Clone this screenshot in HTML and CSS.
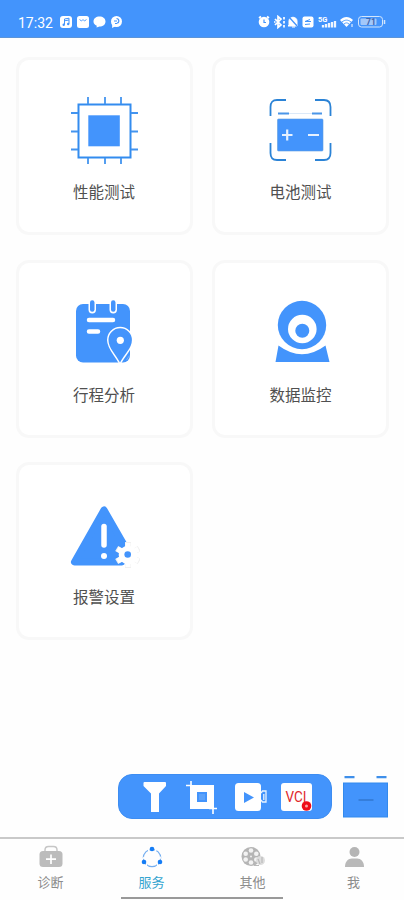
FILE: index.html
```html
<!DOCTYPE html>
<html lang="zh-CN">
<head>
    <meta charset="UTF-8">
    <meta name="viewport" content="width=device-width, initial-scale=1.0">
    <title>服务</title>
    <link rel="stylesheet" href="styles.css">
</head>
<body>
    <div class="app">
        <header class="status-bar">
            <span class="time">17:32</span>
            <svg class="status-left" width="64" height="14" viewBox="0 0 64 14">
                <rect x="0" y="1" width="12" height="12" rx="3" fill="#fff"/>
                <path d="M4.5 9.5V4L9 3.2v5.5M4.5 5.8L9 5" fill="none" stroke="#4394fc" stroke-width="1"/>
                <circle cx="3.7" cy="9.7" r="1.2" fill="#4394fc"/>
                <circle cx="8.2" cy="9" r="1.2" fill="#4394fc"/>
                <rect x="17" y="1" width="12" height="12" rx="2.5" fill="#fff"/>
                <path d="M19.5 4.500l2 1.5L23 4.5l1.500 1.500L26.500 4.500" fill="none" stroke="#4394fc" stroke-width=".9"/>
                <path d="M39.500 1.500c3.500 0 6 2 6 5s-2.500 5-6 5l-3 1 .3-1.700c-2-.8-3.300-2.300-3.300-4.300 0-3 2.500-5 6-5z" fill="#fff"/>
                <circle cx="56.500" cy="6.500" r="5.500" fill="#fff"/>
                <path d="M52.500 8l-.5 5 4-2z" fill="#fff"/>
                <path d="M56.500 3.500c3 0 3 4.500.5 4.500M54 6h3M55 8.500h2" fill="none" stroke="#4394fc" stroke-width="1.200"/>
            </svg>
            <svg class="status-right" width="130" height="14" viewBox="0 0 130 14">
                <circle cx="6" cy="7" r="5.300" fill="#fff"/>
                <path d="M1 3l2-1.500M11 3L9 1.500" stroke="#fff" stroke-width="1.700"/>
                <path d="M6 4.500V7.500H8" fill="none" stroke="#4394fc" stroke-width="1.200"/>
                <path d="M17 4l6 6-3 2.500v-11L23 4l-6 6M16 7h1.500M26 2v2.500M26 6v2.500M26 10v2.500" fill="none" stroke="#fff" stroke-width="1.700"/>
                <path d="M31 10V6c0-5 8-5 8 0v4l1 1H30zM34 12h3" fill="#fff" stroke="#fff"/>
                <path d="M31 2l9 10" stroke="#4394fc" stroke-width="1.300"/>
                <rect x="44.500" y="1.500" width="11" height="11" rx="2" fill="#fff"/>
                <path d="M52 4.500l-5 2h6M47 9.500l5-.5" fill="none" stroke="#4394fc" stroke-width="1"/>
                <text x="60" y="6.500" font-size="7.500" font-weight="bold" fill="#fff">5G</text>
                <path d="M65 12.500V10M68 12.500V9M71 12.500V8M74 12.500V7M77 12.500V6" stroke="#eef5ff" stroke-width="2.300"/>
                <path d="M82 5c4-4 9-4 13 0l-6.500 7z" fill="#fff"/>
                <path d="M84 7c3-2.500 6-2.500 9 0M86 9c2-1.500 3-1.500 5 0" fill="none" stroke="#4394fc" stroke-width=".9"/>
                <path d="M94 9v3" stroke="#fff"/>
                <rect x="100.500" y="1.500" width="24" height="10.500" rx="3" fill="none" stroke="#d3e6fc"/>
                <rect x="102.500" y="3.500" width="16" height="6.500" rx="1" fill="#a3c8fa"/>
                <path d="M126.500 5v4" stroke="#d3e6fc" stroke-width="1.500"/>
                <text x="108" y="10" font-size="8.500" font-weight="bold" fill="#4065ad">71</text>
            </svg>
        </header>

        <main class="services">
            <div class="card">
                <svg class="card-icon" viewBox="0 0 71 71">
                    <rect x="9.500" y="8.500" width="52" height="53" fill="none" stroke="#338cef" stroke-width="2"/>
                    <rect x="19.300" y="19.300" width="31.500" height="31" fill="#4394fc"/>
                    <path d="M19 1V8M36 1V8M52 1V8M19 62v6M36 62v6M52 62v6M2 17h7M2 35.500h7M2 53.500h7M62 17h7M62 35.500h7M62 53.500h7" stroke="#4394ef" stroke-width="1.800"/>
                </svg>
                <div class="card-title">性能测试</div>
            </div>
            <div class="card">
                <svg class="card-icon" viewBox="0 0 71 71">
                    <path d="M5.500 20v-9q0-7 6.500-7h9M50 4h9q6.500 0 6.500 7v9M65.500 47v10q0 7-6.500 7h-9M21 64h-9q-6.500 0-6.500-7v-10" fill="none" stroke="#2b83d6" stroke-width="1.800"/>
                    <path d="M13 17.500h44" stroke="#dce9f8"/>
                    <path d="M13 17.500h11M47 17.500h10" stroke="#4b96e8" stroke-width="2"/>
                    <rect x="12.500" y="23" width="45.500" height="32" rx="1" fill="#4394fc" stroke="#5b9cdf" stroke-width=".6"/>
                    <path d="M17 39h10.500M22.200 33.500v11M43 39h11" stroke="#e6f1ff" stroke-width="2.200"/>
                </svg>
                <div class="card-title">电池测试</div>
            </div>
            <div class="card">
                <svg class="card-icon" viewBox="0 0 71 71">
                    <rect x="7" y="6" width="54" height="58.500" rx="7" fill="#4394fc"/>
                    <rect x="19.500" y="1" width="7.500" height="14.500" rx="3.700" fill="#fff"/>
                    <rect x="40.500" y="1" width="7.500" height="14.500" rx="3.700" fill="#fff"/>
                    <rect x="21" y="2.300" width="4.500" height="11.500" rx="2.200" fill="#4394fc"/>
                    <rect x="42" y="2.300" width="4.500" height="11.500" rx="2.200" fill="#4394fc"/>
                    <path d="M20 22h24M20 33.500h9" stroke="#fff" stroke-width="4.500" stroke-linecap="round"/>
                    <path class="pin" d="M51 64.500C46.500 56 39.500 50 39.500 42a11.700 11.700 0 0 1 23.400 0c0 8-7.400 14-11.900 22.500z"/>
                    <path d="M57.500 62l3-4.500" stroke="#78b0fa" stroke-width="1"/>
                    <circle cx="51.300" cy="42.300" r="3.600" fill="#fff"/>
                </svg>
                <div class="card-title">行程分析</div>
            </div>
            <div class="card">
                <svg class="card-icon" viewBox="0 0 71 71">
                    <path d="M13.500 47.500Q37 65 60.500 47.500L64.500 64h-54z" fill="#4394fc"/>
                    <circle cx="37" cy="27" r="26" fill="#fff"/>
                    <circle cx="37" cy="27" r="24.200" fill="#4394fc"/>
                    <circle cx="37.300" cy="31" r="14.300" fill="#fff"/>
                    <circle cx="37.300" cy="32.800" r="7" fill="#4394fc"/>
                </svg>
                <div class="card-title">数据监控</div>
            </div>
            <div class="card">
                <svg class="card-icon" viewBox="0 0 71 71">
                    <path d="M35 9L5.500 61H53l5-12z" fill="#4394fc" stroke="#4394fc" stroke-width="7" stroke-linejoin="round"/>
                    <path d="M35 25.500v18.500" stroke="#fff" stroke-width="5.500" stroke-linecap="round"/>
                    <circle cx="35" cy="55" r="3" fill="#fff"/>
                    <path class="gear-shade" d="M59 41v26M47.700 47.500l22.600 13M47.700 60.500l22.600-13"/>
                    <circle cx="59" cy="54" r="9.300" fill="#fff"/>
                    <path class="gear-teeth" d="M59 42v24M48.600 48l20.800 12M48.600 60l20.800-12"/>
                    <circle cx="58.700" cy="53.500" r="3.300" fill="#4394fc"/>
                </svg>
                <div class="card-title">报警设置</div>
            </div>
        </main>

        <div class="tools">
            <div class="tool-box">
                <svg width="24" height="32" viewBox="0 0 24 32">
                    <path d="M1.500 1h20.500q1 0 1 1v3l-7 7.500V31H8V12.500L.5 5V2q0-1 1-1z" fill="#fff"/>
                </svg>
                <svg class="crop" width="32" height="34" viewBox="0 0 32 34">
                    <path d="M0 5.500h6M5 1v6M27 24v10M23 28.500h8" stroke="#fff" stroke-width="1.600"/>
                    <rect x="4" y="5" width="24" height="24" fill="#fff"/>
                    <rect x="11" y="12" width="10" height="10" fill="#4394fc"/>
                    <rect x="13" y="14" width="6" height="6" fill="#5ca2fa"/>
                </svg>
                <svg class="video" width="32" height="28" viewBox="0 0 32 28">
                    <rect x="0" y="0" width="26" height="28" rx="3.500" fill="#fff"/>
                    <path d="M9 9l10 5.500L9 20z" fill="#4394fc"/>
                    <path d="M26 10l1.500-2H31v11h-3.500l-1.500-2M28.800 11v6" fill="none" stroke="#e9f3ff" stroke-width="1.300"/>
                </svg>
                <svg class="vci" width="32" height="28" viewBox="0 0 32 28">
                    <rect x="0" y="0" width="31" height="28" rx="3" fill="#fff"/>
                    <text x="4.500" y="18.500" font-size="15" textLength="21" lengthAdjust="spacingAndGlyphs" fill="#e0282c">VCI</text>
                    <circle cx="25.500" cy="23" r="4.800" fill="#ee0b19"/>
                    <circle cx="25.500" cy="23" r="1.500" fill="#f9a2a5"/>
                </svg>
            </div>
            <svg class="battery" width="45" height="42" viewBox="0 0 45 42">
                <path d="M1.500 1.200h10M33.500 1.200h10" stroke="#3f8fea" stroke-width="2.200"/>
                <rect x=".5" y="7" width="44" height="34" fill="#4394fc" stroke="#338aed"/>
                <path d="M15.500 24h15" stroke="#2c6fc5" stroke-width="1.200"/>
            </svg>
        </div>

        <nav class="tab-bar">
            <div class="tab">
                <svg width="26" height="24" viewBox="0 0 26 24">
                    <path d="M7 7V5q0-3.500 3.500-3.500h5Q19 1.500 19 5v2" fill="none" stroke="#c6c6c6" stroke-width="1.500"/>
                    <rect x="1.500" y="6" width="23" height="16" rx="3.500" fill="#bcbcbc"/>
                    <path d="M8 14.200h10M13 9.500v9.500" stroke="#fff" stroke-width="1.700"/>
                </svg>
                <span>诊断</span>
            </div>
            <div class="tab active">
                <svg width="26" height="24" viewBox="0 0 26 24">
                    <circle cx="13" cy="13" r="8.700" fill="none" stroke="#76aff0" stroke-width="1.200"/>
                    <path d="M9 4.500l1.500 0M16 4.500h1.500M4 12.500l1 1M21 13l1-.5M7 20l1 0M18 20h1" stroke="#fefefe" stroke-width="3"/>
                    <circle cx="13" cy="4" r="2.300" fill="#167df5"/>
                    <circle cx="5" cy="17" r="2.300" fill="#167df5"/>
                    <circle cx="21" cy="17" r="2.300" fill="#167df5"/>
                </svg>
                <span>服务</span>
            </div>
            <div class="tab">
                <svg width="26" height="24" viewBox="0 0 26 24">
                    <circle cx="11" cy="11.500" r="9.500" fill="#b5b5b5"/>
                    <g fill="#f2f2f2">
                        <circle cx="11" cy="5.500" r="2.300"/>
                        <circle cx="16.300" cy="8.700" r="2.300"/>
                        <circle cx="16.300" cy="14.500" r="2.300"/>
                        <circle cx="11" cy="17.500" r="2.300"/>
                        <circle cx="5.700" cy="14.500" r="2.300"/>
                        <circle cx="5.700" cy="8.700" r="2.300"/>
                        <circle cx="11" cy="11.500" r="1"/>
                    </g>
                    <circle cx="20.500" cy="15.500" r="4.500" fill="#ddd"/>
                    <path d="M14 20.500h5M18 14l2 5M22 12v6" stroke="#b9b9b9" stroke-width="1.200"/>
                </svg>
                <span>其他</span>
            </div>
            <div class="tab">
                <svg width="26" height="24" viewBox="0 0 26 24">
                    <circle cx="13.500" cy="7" r="5" fill="#b5b5b5"/>
                    <path d="M4 22c0-5.500 3-8.500 7-8.500h5c4 0 7 3 7 8.500z" fill="#b9b9b9"/>
                </svg>
                <span>我</span>
            </div>
        </nav>
        <div class="home-line"></div>
    </div>
</body>
</html>
```
FILE: styles.css
```css
* {
    box-sizing: border-box;
}
body {
    margin: 0;
    background: #fefefe;
    font-family: Roboto, "Noto Sans CJK SC", sans-serif;
}
svg {
    display: block;
    flex-shrink: 0;
}
.app {
    display: flex;
    flex-direction: column;
    height: 900px;
    overflow: hidden;
}
/* Status bar */
.status-bar {
    display: flex;
    align-items: center;
    height: 38px;
    padding: 7px 16px 0 18px;
    background: #4394fc;
    border-bottom: 1px solid #5c94d8;
    color: #fff;
    flex-shrink: 0;
}
.time {
    width: 42px;
    padding-top: 2px;
    font-size: 14px;
    line-height: 14px;
}
.status-right {
    margin-left: auto;
}
/* Service cards */
.services {
    display: grid;
    grid-template-columns: 177px 177px;
    grid-auto-rows: 178px;
    gap: 24.5px 19.5px;
    padding: 19px 15.5px 0;
    flex: 1;
}
.card {
    display: flex;
    flex-direction: column;
    align-items: center;
    padding-top: 35.5px;
    background: #fff;
    border: 3px solid #f8f8f8;
    border-radius: 13px;
}
.card-icon {
    width: 71px;
    height: 71px;
}
.card-title {
    margin-top: 15.5px;
    font-size: 15.5px;
    line-height: 22px;
    color: #505050;
}
.pin {
    fill: #4394fc;
    stroke: #fff;
    stroke-width: 3px;
    paint-order: stroke;
}
.gear-shade {
    stroke: #f0f0f0;
    stroke-width: 6px;
}
.gear-teeth {
    stroke: #fff;
    stroke-width: 5px;
}
/* Floating tools */
.tools {
    display: flex;
    align-items: center;
    justify-content: flex-end;
    gap: 11px;
    height: 45px;
    margin: 0 16px 18px;
    flex-shrink: 0;
}
.tool-box {
    display: flex;
    align-items: center;
    width: 214px;
    height: 45px;
    padding-left: 24px;
    background: #4394fc;
    border: 1px solid #3d8df2;
    border-radius: 14px;
}
.crop {
    margin-left: 19px;
}
.video {
    margin-left: 17px;
}
.vci {
    margin-left: 14px;
}
/* Bottom tabs */
.tab-bar {
    display: flex;
    height: 60px;
    padding-top: 6px;
    border-top: 2px solid #c9c9c9;
    flex-shrink: 0;
}
.tab {
    display: flex;
    flex: 1;
    flex-direction: column;
    align-items: center;
    font-size: 13px;
    line-height: 20px;
    color: #8c8c8c;
}
.tab span {
    margin-top: 4px;
}
.tab.active {
    color: #35a5d0;
}
.home-line {
    width: 162px;
    height: 2px;
    margin: 0 auto 1px;
    background: #999;
    flex-shrink: 0;
}
```
